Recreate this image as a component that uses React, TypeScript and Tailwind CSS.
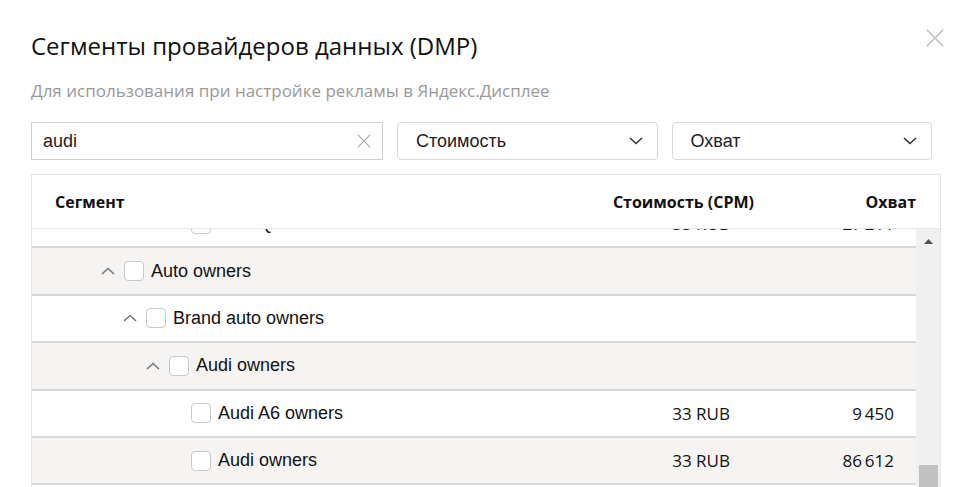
import type { ReactNode } from 'react'

type Row = { label: string; level: number; parent?: boolean; cost?: string; reach?: string }

const ROWS: Row[] = [
  { label: 'Audi Q7', level: 3, cost: '33 RUB', reach: '27\u2009211' },
  { label: 'Auto owners', level: 0, parent: true },
  { label: 'Brand auto owners', level: 1, parent: true },
  { label: 'Audi owners', level: 2, parent: true },
  { label: 'Audi A6 owners', level: 3, cost: '33 RUB', reach: '9\u2009450' },
  { label: 'Audi owners', level: 3, cost: '33 RUB', reach: '86\u2009612' },
  { label: 'Audi Q5 owners', level: 3, cost: '33 RUB', reach: '12\u2009430' },
]

const INDENT = ['pl-[69px]', 'pl-[91px]', 'pl-[114px]', 'pl-[136px]']

const ui = { fontFamily: '"Open Sans", "Noto Sans", sans-serif' }
const arial = { fontFamily: '"Liberation Sans", Arial, sans-serif' }

function Chevron({ up }: { up?: boolean }) {
  return (
    <svg width="14" height="8" viewBox="0 0 14 8" fill="none" stroke="currentColor" strokeWidth="1.6">
      {up ? <polyline points="1,7 7,1.5 13,7" /> : <polyline points="1,1 7,6.5 13,1" />}
    </svg>
  )
}

function Cross({ size, className }: { size: number; className: string }) {
  return (
    <svg width={size} height={size} viewBox="0 0 20 20" className={className} stroke="currentColor" fill="none">
      <line x1="1" y1="1" x2="19" y2="19" />
      <line x1="19" y1="1" x2="1" y2="19" />
    </svg>
  )
}

function Select({ children }: { children: ReactNode }) {
  return (
    <div className="flex h-[38px] flex-1 items-center justify-between rounded-[4px] border border-[#d9d9d9] pl-[18px] pr-[14px] text-[18px] text-[#222]" style={arial}>
      <span>{children}</span>
      <span className="text-[#333]">
        <Chevron />
      </span>
    </div>
  )
}

export default function App() {
  return (
    <div className="h-[487px] w-[972px] overflow-hidden bg-white" style={ui}>
      <div className="flex items-start justify-between pl-[31px] pr-[28px] pt-[30px]">
        <h1 className="text-[24px] leading-[32px] font-normal text-[#111]">Сегменты провайдеров данных (DMP)</h1>
        <Cross size={18} className="mt-[-1px] text-[#c8c8c8] [stroke-width:2.2]" />
      </div>
      <p className="mt-[16px] pl-[31px] text-[17px] leading-[26px] text-[#999]">Для использования при настройке рекламы в Яндекс.Дисплее</p>

      <div className="mt-[18px] flex gap-[14px] pl-[31px] pr-[40px]">
        <div className="flex h-[38px] w-[352px] items-center justify-between border border-[#cfcfcf] pl-[11px] pr-[11px] text-[18px] text-[#222]" style={arial}>
          <span>audi</span>
          <Cross size={14} className="text-[#a8a8a8] [stroke-width:1.6]" />
        </div>
        <Select>Стоимость</Select>
        <Select>Охват</Select>
      </div>

      <div className="ml-[31px] mt-[14px] w-[910px] border-l border-r border-t border-[#e6e6e6]">
        <div className="flex h-[54px] items-center border-b border-[#e8e8e8] pl-[23px] text-[16px] font-bold text-[#111]">
          <span className="flex-1">Сегмент</span>
          <span className="w-[200px] text-right">Стоимость (CPM)</span>
          <span className="w-[186px] pr-[24px] text-right">Охват</span>
        </div>
        <div className="flex h-[262px]">
          <div className="h-full flex-1 overflow-hidden">
            <div className="mt-[-28px]">
              {ROWS.map((r, i) => (
                <div
                  key={i}
                  className={`flex h-[47.4px] items-center border-b-2 border-[#d8d8d8] ${i % 2 === 1 ? 'bg-[#f5f4f2]' : 'bg-white'}`}
                >
                  <div className={`flex flex-1 items-center ${INDENT[r.level]}`}>
                    <span className="flex w-[23px] text-[#777]">{r.parent && <Chevron up />}</span>
                    <span className="h-[20px] w-[20px] rounded-[4px] border border-[#c9c9c9] bg-white" />
                    <span className="ml-[7px] text-[18px] text-[#111]" style={arial}>
                      {r.label}
                    </span>
                  </div>
                  <span className="w-[200px] pr-[24px] text-right text-[17px] text-[#111]">{r.cost}</span>
                  <span className="w-[162px] pr-[22px] text-right text-[17px] text-[#111]">{r.reach}</span>
                </div>
              ))}
            </div>
          </div>
          <div className="flex w-[24px] flex-col items-center justify-between bg-[#f0f0f0]">
            <svg width="9" height="5" viewBox="0 0 9 5" className="mt-[10px]">
              <polygon points="0,5 4.5,0 9,5" fill="#505050" />
            </svg>
            <div className="h-[26px] w-[19px] bg-[#c1c1c1]" />
          </div>
        </div>
      </div>
    </div>
  )
}
